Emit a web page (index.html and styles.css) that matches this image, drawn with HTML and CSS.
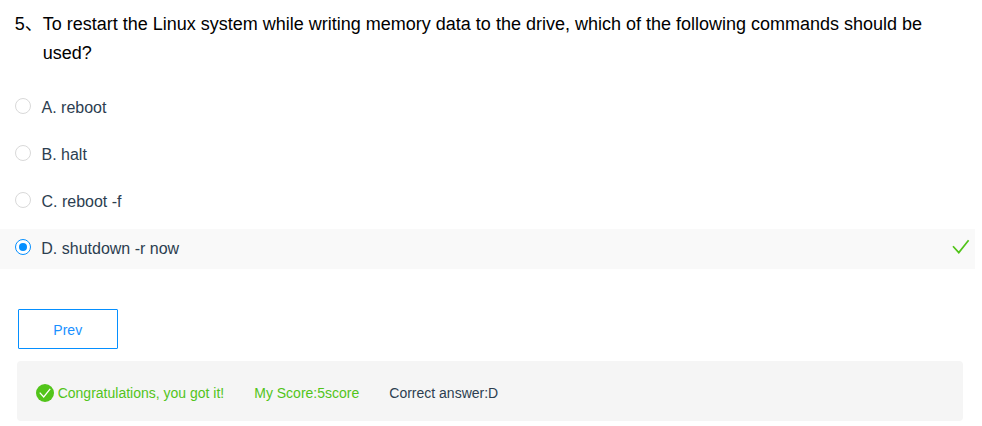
FILE: index.html
```
<!DOCTYPE html>
<html lang="en">
<head>
<meta charset="utf-8">
<title>Quiz</title>
<link rel="stylesheet" href="styles.css">
</head>
<body>
<main class="quiz">
  <h1 class="question"><span class="number">5<span class="mark">、</span></span><span class="question-text">To restart the Linux system while writing memory data to the drive, which of the following commands should be used?</span></h1>
  <div class="options">
    <div class="option"><span class="radio"></span><span class="label">A. reboot</span></div>
    <div class="option"><span class="radio"></span><span class="label">B. halt</span></div>
    <div class="option"><span class="radio"></span><span class="label">C. reboot -f</span></div>
    <div class="option selected"><span class="radio"></span><span class="label">D. shutdown -r now</span>
      <svg class="tick" viewBox="0 0 18 16"><path d="M1 7.2 6.8 13.6 16.6 1.2"/></svg>
    </div>
  </div>
  <button class="prev">Prev</button>
  <div class="result">
    <svg class="badge" viewBox="0 0 18 18"><circle cx="9" cy="9" r="9"/><path d="M3.7 8.6 7.7 12.9 14.2 4.9"/></svg>
    <span class="good">Congratulations, you got it!</span>
    <span class="score">My Score:5score</span>
    <span class="answer">Correct answer:D</span>
  </div>
</main>
</body>
</html>
```
FILE: styles.css
```
* { box-sizing: border-box; }
body {
  margin: 0;
  background: #fff;
  color: #2c3e50;
  font-family: "Liberation Sans", "Noto Sans CJK SC", sans-serif;
  font-size: 14px;
}
.quiz { padding-top: 10px; }
.question {
  display: flex;
  margin: 0 0 20px 14.7px;
  width: 930px;
  font-size: 18px;
  font-weight: 400;
  line-height: 29px;
  color: #000;
}
.number { flex: 0 0 28px; white-space: nowrap; }
.mark { line-height: 1; }
.options { width: 975px; }
.option {
  display: flex;
  align-items: center;
  height: 40px;
  margin-bottom: 7px;
  padding: 0 5px 0 15px;
  font-size: 16px;
}
.selected { background: #f9f9f9; }
.radio {
  display: flex;
  align-items: center;
  justify-content: center;
  width: 16px;
  height: 16px;
  margin: 0 10.5px 4px 0;
  border: 1px solid #d9d9d9;
  border-radius: 50%;
  background: #fff;
}
.selected .radio { margin-right: 10.3px; border-color: #058fff; }
.selected .radio::after {
  content: "";
  width: 8px;
  height: 8px;
  border-radius: 50%;
  background: #058fff;
}
.label { line-height: 20px; }
.tick {
  width: 18px;
  height: 16px;
  margin: 0 0 4px auto;
  fill: none;
  stroke: #52c41a;
  stroke-width: 1.7;
}
.prev {
  display: block;
  width: 100px;
  height: 40px;
  margin: 40px 0 12px 18px;
  padding: 2px 0.5px 0 0;
  border: 1px solid #058fff;
  border-radius: 1px;
  background: #fff;
  color: #1890ff;
  font: inherit;
}
.result {
  display: flex;
  align-items: center;
  width: 946px;
  height: 60px;
  margin-left: 17px;
  padding: 4px 19px 0;
  border-radius: 4px;
  background: #f5f5f5;
}
.badge { width: 18px; height: 18px; margin-right: 3.7px; fill: #52c41a; }
.badge path { fill: none; stroke: #fff; stroke-width: 1.3; }
.good, .score { margin-right: 30px; color: #52c41a; }
```
